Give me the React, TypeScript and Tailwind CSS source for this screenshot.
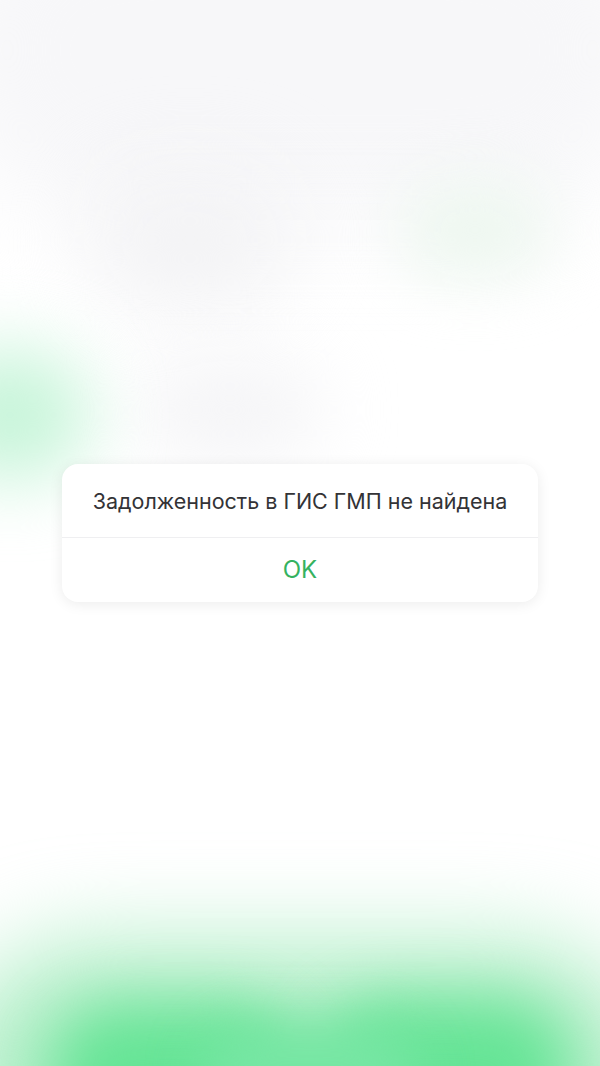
export default function App() {
  return (
    <div
      className="relative w-[600px] h-[1066px] overflow-hidden bg-white"
      style={{ fontFamily: 'Inter, "Noto Sans", sans-serif' }}
    >
      {/* blurred backdrop */}
      <div className="absolute inset-0 pointer-events-none">
        <div className="absolute -left-[60px] -top-[120px] w-[720px] h-[340px] rounded-full bg-[#f7f7f9] blur-[50px]" />
        <div className="absolute left-[90px] top-[170px] w-[200px] h-[140px] rounded-full bg-[#f3f3f5] blur-[40px]" />
        <div className="absolute left-[140px] top-[360px] w-[180px] h-[100px] rounded-full bg-[#f5f5f7] blur-[35px]" />
        <div className="absolute left-[400px] top-[180px] w-[150px] h-[100px] rounded-full bg-[#eef7f0] blur-[30px]" />
        <div className="absolute -left-[70px] top-[350px] w-[160px] h-[130px] rounded-full bg-[#c8f5da] blur-[35px]" />
        <div className="absolute -left-[60px] top-[940px] w-[720px] h-[300px] rounded-full bg-[#b4efc9] blur-[45px]" />
        <div className="absolute left-[50px] top-[1005px] w-[250px] h-[140px] rounded-full bg-[#66e496] blur-[30px]" />
        <div className="absolute left-[320px] top-[1000px] w-[250px] h-[140px] rounded-full bg-[#66e496] blur-[30px]" />
        <div className="absolute left-[200px] top-[1025px] w-[220px] h-[110px] rounded-full bg-[#76e6a3] blur-[25px]" />
      </div>

      {/* alert */}
      <div className="relative flex justify-center pt-[464px]">
        <div className="w-[476px] rounded-[16px] bg-white shadow-[0_2px_14px_rgba(0,0,0,0.08)]">
          <div className="h-[73px] flex items-center justify-center text-[21.5px] text-[#333336] pt-[2px]">
            Задолженность в ГИС ГМП не найдена
          </div>
          <div className="h-px bg-[#efeff1]" />
          <div className="h-[64px] flex items-center justify-center text-[24px] text-[#35b25f]">
            OK
          </div>
        </div>
      </div>
    </div>
  );
}
